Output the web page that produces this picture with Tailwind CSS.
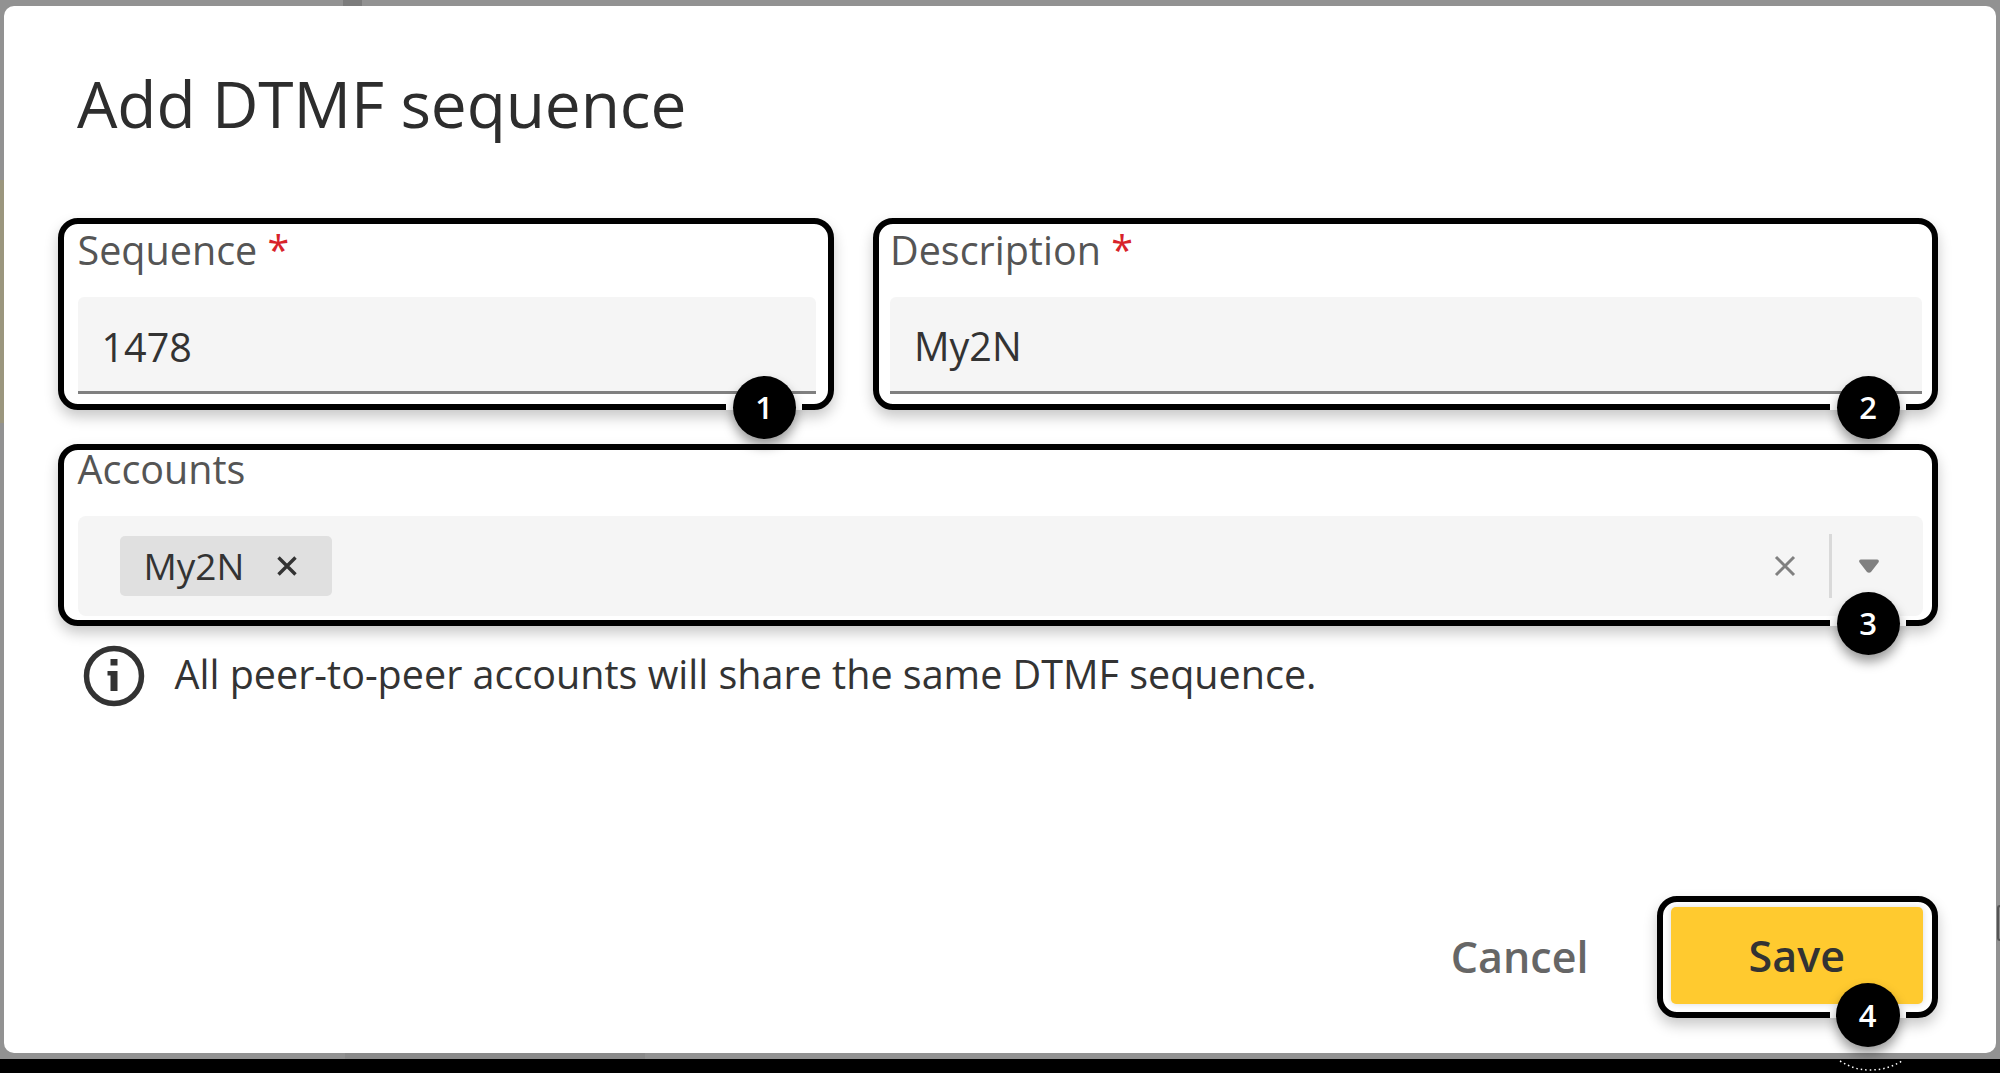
<!DOCTYPE html>
<html lang="en">
<head>
    <meta charset="UTF-8">
    <meta name="viewport" content="width=device-width, initial-scale=1.0">
    <title>Add DTMF sequence</title>
    <script src="https://cdn.jsdelivr.net/npm/@tailwindcss/browser@4"></script>
</head>
<body class="bg-black font-['Open_Sans',sans-serif] text-[#333]">
<div class="relative w-[2000px] h-[1073px] overflow-hidden">

    <!-- Backdrop -->
    <div class="relative h-[1059px] bg-[#929292] pt-[6px] px-[4px]">
        <span class="absolute left-[343px] top-0 w-[19px] h-[6px] bg-[#7c7c7c]"></span>
        <span class="absolute left-0 top-[180px] w-[4px] h-[243px] bg-[#9b967e]"></span>
        <span class="absolute left-[345px] bottom-0 w-[300px] h-[6px] bg-[#8a8a8a]"></span>

        <!-- Dialog -->
        <div class="relative flex flex-col h-[1047px] bg-white rounded-[10px] pl-[54px] pr-[58.5px]">
            <h1 class="pl-[19px] pt-[54px] h-[212px] text-[64px] leading-[88px] tracking-[-0.1px] text-[#2d2d2d]">Add DTMF sequence</h1>

            <div class="flex gap-[39px]">
                <!-- Sequence -->
                <div class="relative w-[775.5px] h-[192px] border-[6px] border-black rounded-[20px] pl-[13.5px] pr-[12px] shadow-[0_7px_14px_rgba(0,0,0,0.22)]">
                    <label class="block h-[73px] pt-[2px] text-[39.5px] leading-[48px] text-[#555]">Sequence <span class="text-[#d8232a]">*</span></label>
                    <div class="flex items-center h-[97px] pl-[24px] pt-[7px] bg-[#f5f5f5] rounded-t-[6px] border-b-[3px] border-[#808080] text-[39.5px]">1478</div>
                    <span class="absolute right-[25.5px] bottom-[-6px] w-[76px] h-[6px] bg-white"></span>
                    <span class="absolute right-[32px] bottom-[-34.5px] flex items-center justify-center w-[63px] h-[63px] rounded-full bg-black text-white text-[31px] font-semibold shadow-[0_7px_12px_rgba(0,0,0,0.4)]">1</span>
                </div>
                <!-- Description -->
                <div class="relative w-[1065px] h-[192px] border-[6px] border-black rounded-[20px] pl-[11.5px] pr-[9.5px] shadow-[0_7px_14px_rgba(0,0,0,0.22)]">
                    <label class="block h-[73px] pt-[2px] text-[39.5px] leading-[48px] text-[#555]">Description <span class="text-[#d8232a]">*</span></label>
                    <div class="flex items-center h-[97px] pl-[24px] pt-[6px] bg-[#f5f5f5] rounded-t-[6px] border-b-[3px] border-[#808080] text-[39.5px]">My2N</div>
                    <span class="absolute right-[25.5px] bottom-[-6px] w-[76px] h-[6px] bg-white"></span>
                    <span class="absolute right-[32px] bottom-[-34.5px] flex items-center justify-center w-[63px] h-[63px] rounded-full bg-black text-white text-[31px] font-semibold shadow-[0_7px_12px_rgba(0,0,0,0.4)]">2</span>
                </div>
            </div>

            <!-- Accounts -->
            <div class="relative mt-[34px] h-[182px] border-[6px] border-black rounded-[20px] pl-[13.5px] pr-[9px] shadow-[0_7px_14px_rgba(0,0,0,0.22)]">
                <label class="block h-[66px] mt-[-5px] mb-[5px] text-[39.5px] leading-[48px] text-[#555]">Accounts</label>
                <div class="flex items-center h-[100px] pl-[42px] pr-[43px] bg-[#f5f5f5] rounded-[8px]">
                    <span class="flex items-center h-[60px] w-[212px] pl-[24px] bg-[#e0e0e0] rounded-[5px] text-[37px]">
                        My2N
                        <svg class="ml-[32px]" width="22" height="22" viewBox="0 0 22 22" fill="none" stroke="#333" stroke-width="3.4"><path d="M2.5 2.5l17 17M19.5 2.5l-17 17"/></svg>
                    </span>
                    <svg class="ml-auto" width="22" height="22" viewBox="0 0 22 22" fill="none" stroke="#808080" stroke-width="3"><path d="M2 2l18 18M20 2L2 20"/></svg>
                    <span class="ml-[33px] w-[3px] h-[64px] bg-[#d9d9d9]"></span>
                    <svg class="ml-[25.5px]" width="22" height="15" viewBox="0 0 22 15"><path d="M3 .5h16c1.700 0 2.500 1.800 1.400 3L13 13c-1 1.100-3 1.100-4 0L1.600 3.500C.5 2.300 1.300.5 3 .5z" fill="#808080"/></svg>
                </div>
                <span class="absolute right-[25.5px] bottom-[-6px] w-[76px] h-[6px] bg-white"></span>
                <span class="absolute right-[32px] bottom-[-34.5px] flex items-center justify-center w-[63px] h-[63px] rounded-full bg-black text-white text-[31px] font-semibold shadow-[0_7px_12px_rgba(0,0,0,0.4)]">3</span>
            </div>

            <!-- Hint -->
            <div class="flex items-center mt-[14px] pl-[24.5px] h-[72px] text-[39.5px]">
                <svg width="62" height="62" viewBox="0 0 62 62" fill="none">
                    <circle cx="31" cy="31" r="27.500" stroke="#333" stroke-width="5.500"/>
                    <rect x="27.500" y="14" width="7" height="6.500" fill="#333"/>
                    <path d="M24.500 26h10v20h-7V30.500h-3z" fill="#333"/>
                </svg>
                <span class="ml-[30px] mt-[-2px]">All peer-to-peer accounts will share the same DTMF sequence.</span>
            </div>

            <!-- Footer -->
            <div class="flex items-center justify-end mt-auto mb-[35px] gap-[68px]">
                <button class="text-[43px] font-semibold text-[#666]">Cancel</button>
                <div class="relative w-[281px] h-[122px] border-[6px] border-black rounded-[20px] pl-[8px] pr-[8.500px] pt-[5px] shadow-[0_7px_14px_rgba(0,0,0,0.22)]">
                    <button class="w-full h-[97px] pt-[2px] bg-[#ffca2f] rounded-[5px] text-[43px] font-semibold shadow-[0_0_6px_rgba(0,0,0,0.15)]">Save</button>
                    <span class="absolute right-[25.5px] bottom-[-6px] w-[76px] h-[6px] bg-white"></span>
                    <span class="absolute right-[32px] bottom-[-35px] flex items-center justify-center w-[64px] h-[64px] rounded-full bg-black text-white text-[31px] font-semibold shadow-[0_7px_12px_rgba(0,0,0,0.4)]">4</span>
                </div>
            </div>
        </div>
    </div>

    <!-- leftovers of the annotation outside the dialog -->
    <svg class="absolute left-[1838px] top-[1058px]" width="66" height="14" viewBox="0 0 66 14" fill="none"><path d="M2 3c10 6 18 9 30 9s22-3 32-9" stroke="#fff" stroke-width="1.500" stroke-dasharray="1.500 3"/></svg>
    <span class="absolute right-0 top-[905px] w-[3px] h-[36px] rounded-l-full border-l-2 border-y-2 border-[#555]"></span>
</div>
</body>
</html>
